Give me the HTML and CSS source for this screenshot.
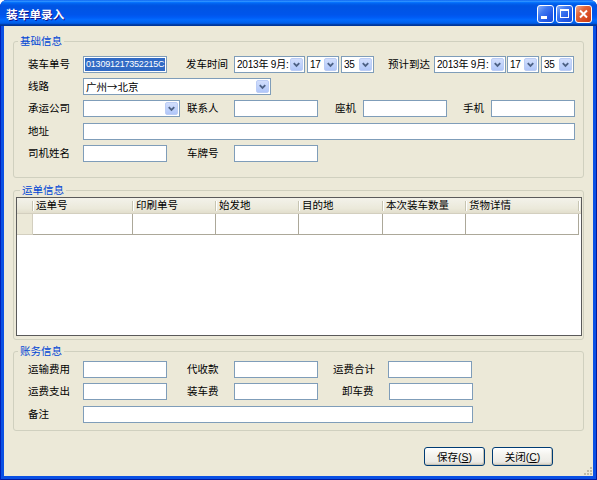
FILE: index.html
```html
<!DOCTYPE html>
<html>
<head>
<meta charset="utf-8">
<title>装车单录入</title>
<link rel="stylesheet" href="styles.css">
</head>
<body>
<div class="window">
  <div class="titlebar">
    <span class="title">装车单录入</span>
    <div class="tbtns">
      <span class="tb"><svg width="15" height="16" viewBox="0 0 15 16"><rect x="3" y="10" width="6" height="3" fill="#fff"/></svg></span>
      <span class="tb"><svg width="15" height="16" viewBox="0 0 15 16"><rect x="3.5" y="3.5" width="8" height="8" fill="none" stroke="#fff" stroke-width="1"/><rect x="3" y="3" width="9" height="2" fill="#fff"/></svg></span>
      <span class="tb close"><svg width="15" height="16" viewBox="0 0 15 16"><path d="M4 4.5 L11 11.5 M11 4.5 L4 11.5" stroke="#fff" stroke-width="2" fill="none"/></svg></span>
    </div>
  </div>
  <div class="client">
    <fieldset class="group g1">
      <legend>基础信息</legend>
      <div class="rows r1">
        <div class="row">
          <span class="lbl w55">装车单号</span>
          <div class="input w84 sel"><span class="seltext">013091217352215C</span></div>
          <span class="lbl w67 p19">发车时间</span>
          <div class="combo w71"><span class="val num">2013年 9月:</span><span class="arrow"><svg width="12" height="13" viewBox="0 0 12 13"><path d="M3 5 L6 8 L9 5" stroke="#4D6185" stroke-width="2" fill="none"/></svg></span></div>
          <div class="combo w32 m2"><span class="val num">17</span><span class="arrow"><svg width="12" height="13" viewBox="0 0 12 13"><path d="M3 5 L6 8 L9 5" stroke="#4D6185" stroke-width="2" fill="none"/></svg></span></div>
          <div class="combo w33 m2"><span class="val num">35</span><span class="arrow"><svg width="12" height="13" viewBox="0 0 12 13"><path d="M3 5 L6 8 L9 5" stroke="#4D6185" stroke-width="2" fill="none"/></svg></span></div>
          <span class="lbl w60 p14">预计到达</span>
          <div class="combo w72"><span class="val num">2013年 9月:</span><span class="arrow"><svg width="12" height="13" viewBox="0 0 12 13"><path d="M3 5 L6 8 L9 5" stroke="#4D6185" stroke-width="2" fill="none"/></svg></span></div>
          <div class="combo w32 m1"><span class="val num">17</span><span class="arrow"><svg width="12" height="13" viewBox="0 0 12 13"><path d="M3 5 L6 8 L9 5" stroke="#4D6185" stroke-width="2" fill="none"/></svg></span></div>
          <div class="combo w33 m2"><span class="val num">35</span><span class="arrow"><svg width="12" height="13" viewBox="0 0 12 13"><path d="M3 5 L6 8 L9 5" stroke="#4D6185" stroke-width="2" fill="none"/></svg></span></div>
        </div>
        <div class="row">
          <span class="lbl w55">线路</span>
          <div class="combo w188"><span class="val cjk">广州→北京</span><span class="arrow"><svg width="12" height="13" viewBox="0 0 12 13"><path d="M3 5 L6 8 L9 5" stroke="#4D6185" stroke-width="2" fill="none"/></svg></span></div>
        </div>
        <div class="row">
          <span class="lbl w55">承运公司</span>
          <div class="combo w97"><span class="val"></span><span class="arrow"><svg width="12" height="13" viewBox="0 0 12 13"><path d="M3 5 L6 8 L9 5" stroke="#4D6185" stroke-width="2" fill="none"/></svg></span></div>
          <span class="lbl w54 p7">联系人</span>
          <div class="input w84"></div>
          <span class="lbl w45 p17">座机</span>
          <div class="input w84"></div>
          <span class="lbl w44 p16">手机</span>
          <div class="input w84"></div>
        </div>
        <div class="row gap6">
          <span class="lbl w55">地址</span>
          <div class="input w492"></div>
        </div>
        <div class="row">
          <span class="lbl w55">司机姓名</span>
          <div class="input w84"></div>
          <span class="lbl w67 p20">车牌号</span>
          <div class="input w84"></div>
        </div>
      </div>
    </fieldset>

    <fieldset class="group g2">
      <legend>运单信息</legend>
      <div class="grid">
        <div class="gh">
          <span class="c rh"></span>
          <span class="c w100">运单号</span>
          <span class="c w83">印刷单号</span>
          <span class="c w83">始发地</span>
          <span class="c w84">目的地</span>
          <span class="c w83">本次装车数量</span>
          <span class="c w113">货物详情</span>
        </div>
        <div class="gr">
          <span class="c rh"></span>
          <span class="c w100"></span>
          <span class="c w83"></span>
          <span class="c w83"></span>
          <span class="c w84"></span>
          <span class="c w83"></span>
          <span class="c w113"></span>
        </div>
      </div>
    </fieldset>

    <fieldset class="group g3">
      <legend>账务信息</legend>
      <div class="rows r3">
        <div class="row">
          <span class="lbl w55">运输费用</span>
          <div class="input w84"></div>
          <span class="lbl w67 p20">代收款</span>
          <div class="input w84"></div>
          <span class="lbl w70 p15">运费合计</span>
          <div class="input w84"></div>
        </div>
        <div class="row">
          <span class="lbl w55">运费支出</span>
          <div class="input w84"></div>
          <span class="lbl w67 p20">装车费</span>
          <div class="input w84"></div>
          <span class="lbl w71 p24">卸车费</span>
          <div class="input w84"></div>
        </div>
        <div class="row gap6">
          <span class="lbl w55">备注</span>
          <div class="input w390"></div>
        </div>
      </div>
    </fieldset>

    <div class="footer">
      <button class="btn">保存(<u>S</u>)</button>
      <button class="btn">关闭(<u>C</u>)</button>
    </div>
    <svg class="grip" width="10" height="10" viewBox="0 0 10 10">
      <g fill="#C0BCA8"><rect x="8" y="2" width="2" height="2"/><rect x="5" y="5" width="2" height="2"/><rect x="8" y="5" width="2" height="2"/><rect x="2" y="8" width="2" height="2"/><rect x="5" y="8" width="2" height="2"/><rect x="8" y="8" width="2" height="2"/></g>
    </svg>
  </div>
</div>
</body>
</html>
```
FILE: styles.css
```css
* { box-sizing: border-box; }
body {
  margin: 0;
  font-family: "Liberation Sans", "Noto Sans CJK SC", sans-serif;
  font-size: 10.5px;
  color: #000;
  background: #fff;
}
.window {
  width: 597px;
  height: 480px;
  background: #0A50E4;
  border-radius: 7px 7px 0 0;
  display: flex;
  flex-direction: column;
  box-shadow: inset 1px 0 #0020B8, inset -1px -1px #001A9E;
}
.titlebar {
  height: 26px;
  flex: none;
  display: flex;
  align-items: center;
  border-radius: 7px 7px 0 0;
  background: linear-gradient(to bottom, #0058EE 0%, #3593FF 4%, #288EFF 6%, #127DFF 8%, #036FFC 10%, #0262EE 14%, #0057E5 20%, #0054E3 24%, #0055EB 56%, #005BF5 66%, #026AFE 76%, #0062EF 86%, #0052D6 92%, #0040AB 94%, #003092 100%);
}
.title {
  margin-left: 6px;
  color: #fff;
  font-weight: bold;
  font-size: 11.5px;
  letter-spacing: 0.2px;
  text-shadow: 1px 1px #0F1089;
  flex: 1;
  padding-top: 1px;
}
.tbtns {
  display: flex;
  gap: 2px;
  margin-right: 5px;
  margin-top: 1px;
}
.tb {
  width: 17px;
  height: 18px;
  border: 1px solid #fff;
  border-radius: 3px;
  background: linear-gradient(135deg, #8AB0FA 0%, #3F78F0 35%, #2258E6 70%, #1A4ED6 100%);
  display: flex;
  align-items: center;
  justify-content: center;
}
.tb.close {
  background: linear-gradient(135deg, #F4A88C 0%, #E26438 35%, #D84A20 70%, #C33A14 100%);
}
.client {
  flex: 1;
  margin: 0 4px 4px;
  background: #ECE9D8;
  position: relative;
  display: flex;
  flex-direction: column;
}
.group {
  margin: 0 9px;
  padding: 0;
  border: 1px solid #D0D0BF;
  border-radius: 3px;
  min-width: 0;
}
.group legend {
  margin-left: 4px;
  padding: 0 2px;
  color: #0046D5;
  line-height: 13px;
  font-size: 10.5px;
}
.g1 { margin-top: 9px; }
.g2 { margin-top: 6px; padding: 0 1px 3px 2px; }
.g3 { margin-top: 5px; }
.rows { padding-left: 14px; }
.r1 { padding-top: 8px; padding-bottom: 15px; }
.r3 { padding-top: 3px; padding-bottom: 7px; }
.row {
  display: flex;
  height: 17px;
  margin-top: 5px;
}
.row:first-child { margin-top: 0; }
.row.gap6 { margin-top: 6px; }
.lbl {
  flex: none;
  line-height: 17px;
  white-space: nowrap;
}
.input {
  flex: none;
  height: 17px;
  border: 1px solid #7F9DB9;
  background: #fff;
  overflow: hidden;
}
.input.sel { padding: 1px; }
.seltext {
  display: block;
  height: 13px;
  background: #316AC5;
  color: #fff;
  font-size: 9px;
  line-height: 13px;
  white-space: nowrap;
  overflow: hidden;
  padding-left: 1px;
  letter-spacing: -0.2px;
}
.combo {
  flex: none;
  height: 17px;
  border: 1px solid #7F9DB9;
  background: #fff;
  display: flex;
}
.combo .val {
  flex: 1;
  min-width: 0;
  padding-left: 2px;
  line-height: 15px;
  white-space: nowrap;
  overflow: hidden;
}
.combo .val.num {
  font-size: 10px;
  letter-spacing: -0.2px;
}
.combo .val.cjk {
  font-family: "Noto Sans CJK SC", sans-serif;
}
.arrow {
  flex: none;
  width: 13px;
  margin: 1px;
  border: 1px solid #BCCDF5;
  border-radius: 2px;
  background: linear-gradient(to bottom, #D2DEFC 0%, #C1D3FB 50%, #B0C6F9 100%);
  display: flex;
  align-items: center;
  justify-content: center;
}
.arrow svg { display: block; }
.m1 { margin-left: 1px; }
.m2 { margin-left: 2px; }
.p7 { padding-left: 7px; }
.p14 { padding-left: 14px; }
.p15 { padding-left: 15px; }
.p16 { padding-left: 16px; }
.p17 { padding-left: 17px; }
.p19 { padding-left: 19px; }
.p20 { padding-left: 20px; }
.p24 { padding-left: 24px; }
.w32 { width: 32px; }
.w33 { width: 33px; }
.w44 { width: 44px; }
.w45 { width: 45px; }
.w54 { width: 54px; }
.w55 { width: 55px; }
.w60 { width: 60px; }
.w67 { width: 67px; }
.w70 { width: 70px; }
.w71 { width: 71px; }
.w72 { width: 72px; }
.w83 { width: 83px; }
.w84 { width: 84px; }
.w97 { width: 97px; }
.w100 { width: 100px; }
.w113 { width: 113px; }
.w188 { width: 188px; }
.w390 { width: 390px; }
.w492 { width: 492px; }

.grid {
  height: 139px;
  border: 1px solid #5A5A5A;
  background: #fff;
  overflow: hidden;
}
.gh {
  display: flex;
  height: 16px;
  background: linear-gradient(to bottom, #F3F2EA 0%, #EBE9DA 70%, #E2DECD 100%);
  border-bottom: 1px solid #D3CFBF;
}
.gh .c {
  flex: none;
  position: relative;
  padding-left: 3px;
  line-height: 15px;
  white-space: nowrap;
}
.gh .c::after {
  content: "";
  position: absolute;
  right: 0;
  top: 3px;
  bottom: 2px;
  width: 1px;
  background: #C7C5B2;
  box-shadow: 1px 0 #fff;
}
.rh { width: 16px; }
.gr {
  display: flex;
  height: 21px;
}
.gr .c {
  flex: none;
  border-right: 1px solid #ACA899;
  border-bottom: 1px solid #ACA899;
  background: #fff;
}
.gr .c.rh {
  background: #ECE9D8;
  border-right: 1px solid #D3CFBF;
  border-bottom: 1px solid #D3CFBF;
}

.footer {
  display: flex;
  justify-content: flex-end;
  gap: 7px;
  margin-top: 16px;
  padding-right: 40px;
}
.btn {
  width: 61px;
  height: 19px;
  padding: 0;
  border: 1px solid #003C74;
  border-radius: 3px;
  background: linear-gradient(to bottom, #FFFFFF 0%, #F4F3EE 40%, #ECEBE6 80%, #D6D0C5 100%);
  font-family: "Liberation Sans", "Noto Sans CJK SC", sans-serif;
  font-size: 10.5px;
  line-height: 16px;
  color: #000;
  box-shadow: inset -1px -1px #C8C3B5;
}
.btn u { text-decoration: underline; }
.grip {
  position: absolute;
  right: 1px;
  bottom: 1px;
}
```
